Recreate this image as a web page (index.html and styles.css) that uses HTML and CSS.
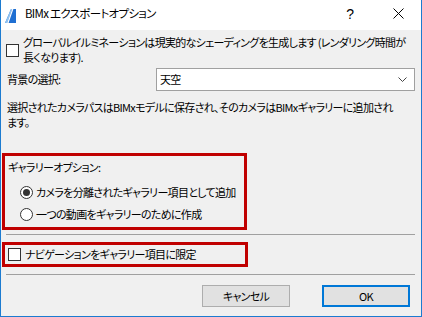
FILE: index.html
```html
<!DOCTYPE html>
<html lang="ja">
<head>
<meta charset="utf-8">
<link rel="stylesheet" href="styles.css">
</head>
<body>
<div class="window">
  <div class="titlebar">
    <svg class="app-icon" width="11" height="14" viewBox="0 0 11 14">
      <polygon points="0,14 6,0 11,0 11,14" fill="#1f6fd2"/>
      <polygon points="0,14 6,0 7.2,0 2.2,14" fill="#8fc3f2"/>
      <polygon points="2.2,14 7.2,0 8.4,0 3.6,14" fill="#ffffff"/>
    </svg>
    <span class="title">BIMx エクスポートオプション</span>
    <span class="tb-help">?</span>
    <svg class="tb-close" width="11" height="11" viewBox="0 0 11 11">
      <path d="M0.5 0.5 L10.5 10.5 M10.5 0.5 L0.5 10.5" stroke="#000" stroke-width="1"/>
    </svg>
  </div>
  <div class="content">
    <div class="check-row gi">
      <span class="checkbox"></span>
      <span class="label">グローバルイルミネーションは現実的なシェーディングを生成します (レンダリング時間が<br>長くなります).</span>
    </div>
    <div class="bg-row">
      <span class="label">背景の選択:</span>
      <div class="select">
        <span>天空</span>
        <svg class="chev" width="9" height="5" viewBox="0 0 9 5"><path d="M0.5 0.5 L4.5 4.5 L8.5 0.5" fill="none" stroke="#444" stroke-width="1"/></svg>
      </div>
    </div>
    <p class="note">選択されたカメラパスはBIMxモデルに保存され、そのカメラはBIMxギャラリーに追加され<br>ます。</p>
    <div class="redbox gallery">
      <div class="group-label">ギャラリーオプション:</div>
      <div class="radio-row"><span class="radio checked"></span><span>カメラを分離されたギャラリー項目として追加</span></div>
      <div class="radio-row"><span class="radio"></span><span>一つの動画をギャラリーのために作成</span></div>
    </div>
    <div class="sep sep1"></div>
    <div class="redbox nav">
      <span class="checkbox"></span>
      <span>ナビゲーションをギャラリー項目に限定</span>
    </div>
    <div class="sep sep2"></div>
    <div class="buttons">
      <button class="btn">キャンセル</button>
      <button class="btn primary">OK</button>
    </div>
  </div>
</div>
</body>
</html>
```

FILE: styles.css
```css
* { box-sizing: border-box; }
html, body { margin: 0; padding: 0; }
body {
  font-family: "Noto Sans CJK JP", "Noto Sans", sans-serif;
  font-size: 11px;
  letter-spacing: -0.7px;
  line-height: 15px;
  color: #000;
  font-feature-settings: "palt" 1;
  background: #f0f0f0;
}
.window {
  width: 422px;
  height: 317px;
  border: 1px solid #1c7bd0;
  border-top: none;
  background: #f0f0f0;
  overflow: hidden;
}
.titlebar {
  height: 30px;
  margin: 0 -1px;
  background: #fff;
  display: flex;
  align-items: center;
  padding-left: 5px;
}
.app-icon { margin-top: 1px; }
.title { margin-left: 9px; margin-top: -3px; font-size: 11.5px; }
.tb-help { margin-left: auto; margin-top: -2px; font-family: "Liberation Sans", sans-serif; font-size: 14px; letter-spacing: 0; }
.tb-close { margin-left: 39px; margin-right: 18px; margin-top: -3px; }
.content { white-space: nowrap; }
.checkbox {
  display: inline-block;
  width: 13px; height: 13px;
  border: 1px solid #333;
  background: #fff;
  flex: none;
}
.check-row { display: flex; align-items: center; }
.gi { margin: 5px 0 0 5px; height: 30px; }
.gi .label { margin-left: 4px; }
.bg-row {
  display: flex;
  align-items: center;
  margin: 3px 6px 0 6px;
  height: 23px;
}
.select {
  margin-left: auto;
  width: 259px;
  height: 23px;
  background: #fff;
  border: 1px solid #a0a0a0;
  display: flex;
  align-items: center;
  padding-left: 3px;
  padding-right: 7px;
}
.chev { margin-left: auto; }
.note { margin: 9px 0 0 6px; }
.redbox { border: 3px solid #c00000; margin-left: 1px; }
.gallery { margin-top: 23px; width: 245px; height: 77px; padding: 4px 0 0 3px; }
.group-label { height: 15px; }
.radio-row { display: flex; align-items: center; height: 22px; padding-left: 12px; }
.gallery .group-label { margin-bottom: 6px; }
.radio {
  width: 13px; height: 13px;
  border: 1px solid #333;
  border-radius: 50%;
  background: #fff;
  margin-right: 3px;
  position: relative;
  flex: none;
}
.radio.checked::after {
  content: "";
  position: absolute;
  left: 2px; top: 2px;
  width: 7px; height: 7px;
  border-radius: 50%;
  background: #333;
}
.sep { height: 1px; background: #a0a0a0; margin: 0 6px 0 5px; }
.sep1 { margin-top: 4px; }
.nav {
  margin-top: 7px;
  width: 246px;
  height: 25px;
  display: flex;
  align-items: center;
  padding-left: 3px;
}
.nav .checkbox { margin-right: 4px; }
.sep2 { margin-top: 7px; }
.buttons {
  display: flex;
  justify-content: flex-end;
  gap: 32px;
  margin: 10px 11px 0 0;
}
.btn {
  width: 88px;
  height: 22px;
  font: inherit;
  letter-spacing: -0.7px;
  font-feature-settings: "palt" 1;
  background: #e1e1e1;
  border: 1px solid #adadad;
  padding: 0;
  color: #000;
}
.btn.primary { border: 2px solid #0078d7; }
```
